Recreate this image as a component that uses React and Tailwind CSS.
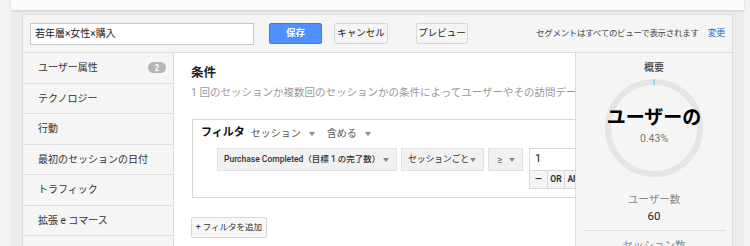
import React from "react";

const FONT = { fontFamily: 'Roboto, "Noto Sans CJK JP", "Noto Sans", sans-serif' };

function Caret({ className = "" }) {
  return (
    <svg width="6" height="4" viewBox="0 0 6 4" className={className}>
      <path d="M0 0 L6 0 L3 4 Z" fill="#888" />
    </svg>
  );
}

const sideItems = ["ユーザー属性", "テクノロジー", "行動", "最初のセッションの日付", "トラフィック", "拡張 e コマース"];

export default function App() {
  return (
    <div className="w-[750px] h-[246px] overflow-hidden bg-[#f3f3f3] flex text-[#222]" style={FONT}>
      <div className="w-[11px] shrink-0" />
      <div className="w-[733px] shrink-0 bg-[#ececec] flex flex-col">
        <div className="h-[10px] shrink-0 bg-[#fcfcfc] shadow-[0_1px_3px_rgba(0,0,0,0.12)]" />
        <div className="ml-[11px] mr-[11px] mt-[4px] border border-[#dcdcdc] bg-[#f5f5f5] flex flex-col h-[260px] shrink-0">
          {/* header */}
          <div className="h-[38px] shrink-0 flex items-center pl-[7px] pr-[7px] border-b border-[#dcdcdc]">
            <div className="w-[224px] h-[22px] bg-white border border-[#c9c9c9] flex items-center pl-[4px] text-[10px] text-[#222]">
              若年層×女性×購入
            </div>
            <div className="ml-[15px] w-[53px] h-[21px] rounded-[2px] bg-[#4d90fe] border border-[#3b7ded] flex items-center justify-center text-white text-[9.5px] font-bold">
              保存
            </div>
            <div className="ml-[12px] w-[54px] h-[21px] rounded-[2px] bg-[#f5f5f5] border border-[#d8d8d8] flex items-center justify-center text-[9.5px] text-[#222]">
              キャンセル
            </div>
            <div className="ml-[28px] w-[52px] h-[21px] rounded-[2px] bg-[#f5f5f5] border border-[#d8d8d8] flex items-center justify-center text-[9.5px] text-[#222]">
              プレビュー
            </div>
            <div className="ml-auto flex items-center text-[8.5px] tracking-[-0.3px] text-[#444]">
              <span>セグメントはすべてのビューで表示されます</span>
              <span className="ml-[9px] text-[9px] text-[#1a73c8]">変更</span>
            </div>
          </div>
          {/* body */}
          <div className="flex flex-1 min-h-0">
            <div className="w-[151px] shrink-0 border-r border-[#dcdcdc] flex flex-col">
              {sideItems.map((t, i) => (
                <div key={t} className="h-[30.5px] shrink-0 border-b border-[#dcdcdc] flex items-center pl-[15px] pr-[7px] text-[10px] text-[#333]">
                  <span>{t}</span>
                  {i === 0 && (
                    <span className="ml-auto w-[18px] h-[11px] rounded-full bg-[#b5b5b5] text-white text-[8.5px] font-bold flex items-center justify-center leading-none">
                      2
                    </span>
                  )}
                </div>
              ))}
            </div>
            <div className="w-[401px] shrink-0 bg-white overflow-hidden pl-[17px] pt-[12px] flex flex-col">
              <div className="text-[12.5px] font-bold text-[#222] leading-[16px] whitespace-nowrap">条件</div>
              <div className="mt-[5px] text-[10.5px] text-[#999] whitespace-nowrap leading-[14px]">
                1 回のセッションか複数回のセッションかの条件によってユーザーやその訪問データを絞り込みます
              </div>
              <div className="mt-[19px] ml-[1px] w-[470px] shrink-0 h-[79px] border border-[#d8d8d8] pl-[8px] pt-[5px] flex flex-col">
                <div className="flex items-center h-[17px] whitespace-nowrap">
                  <span className="text-[11px] font-bold text-[#111]">フィルタ</span>
                  <span className="ml-[6px] text-[10px] text-[#555]">セッション</span>
                  <Caret className="ml-[8px]" />
                  <span className="ml-[12px] text-[10px] text-[#555]">含める</span>
                  <Caret className="ml-[8px]" />
                </div>
                <div className="mt-[6px] ml-[16px] flex whitespace-nowrap">
                  <div className="w-[180px] h-[23px] bg-[#f1f1f1] border border-[#e2e2e2] flex items-center pl-[6px] pr-[7px] text-[8.5px] font-medium text-[#333]">
                    <span>Purchase Completed（目標 1 の完了数）</span>
                    <Caret className="ml-auto" />
                  </div>
                  <div className="ml-[4px] w-[83px] h-[23px] bg-[#f1f1f1] border border-[#e2e2e2] flex items-center pl-[6px] pr-[7px] text-[9px] tracking-[-0.3px] text-[#333]">
                    <span>セッションごと</span>
                    <Caret className="ml-auto" />
                  </div>
                  <div className="ml-[4px] w-[35px] h-[23px] bg-[#f1f1f1] border border-[#e2e2e2] flex items-center pl-[8px] pr-[7px] text-[10px] text-[#666]">
                    <span>≥</span>
                    <Caret className="ml-auto" />
                  </div>
                  <div className="ml-[6px] flex flex-col">
                    <div className="w-[80px] h-[23px] bg-white border border-[#d8d8d8] flex items-center pl-[5px] text-[11px] text-[#222]">1</div>
                    <div className="flex h-[18px]">
                      <div className="w-[18px] border-l border-b border-[#d8d8d8] bg-[#f5f5f5] flex items-center justify-center text-[9px] font-bold text-[#333]">—</div>
                      <div className="w-[17px] border-l border-b border-[#d8d8d8] bg-[#f5f5f5] flex items-center justify-center text-[8.5px] font-bold text-[#333]">OR</div>
                      <div className="w-[24px] border-l border-b border-r border-[#d8d8d8] bg-[#f5f5f5] flex items-center justify-center text-[8.5px] font-bold text-[#333]">AND</div>
                    </div>
                  </div>
                </div>
              </div>
              <div className="mt-[19px] w-[76px] h-[21px] rounded-[2px] bg-[#f7f7f7] border border-[#d8d8d8] flex items-center justify-center text-[8.5px] text-[#333] whitespace-nowrap">
                + フィルタを追加
              </div>
            </div>
            <div className="flex-1 border-l border-[#dcdcdc] bg-[#f5f5f5] flex flex-col items-center pt-[9px]">
              <div className="text-[10px] font-medium text-[#444] leading-[12px]">概要</div>
              <div className="relative mt-[5px] w-[98px] h-[98px]">
                <svg width="98" height="98" viewBox="0 0 98 98">
                  <circle cx="49" cy="49" r="46" fill="none" stroke="#e5e5e5" strokeWidth="6" />
                  <rect x="48.5" y="0" width="1" height="6" fill="#4fc3f7" />
                </svg>
                <div className="absolute inset-0 flex flex-col items-center justify-center">
                  <div className="text-[19px] font-bold text-black leading-[22px] whitespace-nowrap mt-[-4px]">ユーザーの</div>
                  <div className="text-[10.5px] text-[#777] leading-[14px] mt-[3px]">0.43%</div>
                </div>
              </div>
              <div className="mt-[16px] text-[10.5px] text-[#888] leading-[14px]">ユーザー数</div>
              <div className="mt-[2px] text-[11.5px] text-[#222] leading-[14px]">60</div>
              <div className="mt-[7px] w-[143px] h-px bg-[#dcdcdc]" />
              <div className="mt-[8px] text-[10.5px] text-[#888] leading-[14px]">セッション数</div>
            </div>
          </div>
        </div>
      </div>
    </div>
  );
}
